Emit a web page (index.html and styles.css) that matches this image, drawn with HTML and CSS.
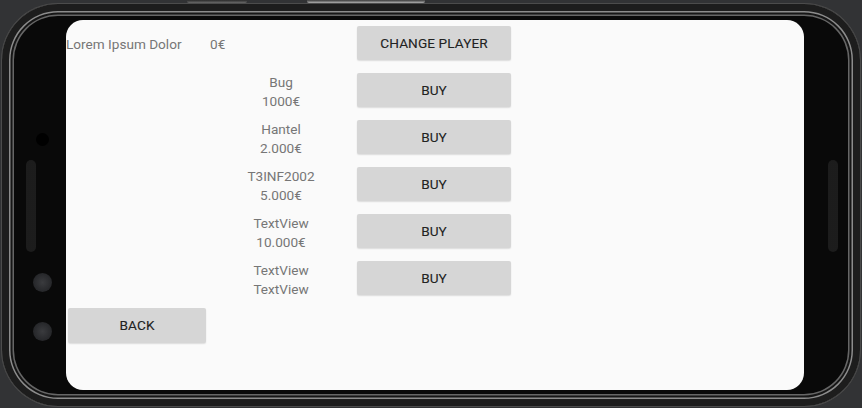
FILE: index.html
```html
<!DOCTYPE html>
<html lang="en">
<head>
    <meta charset="UTF-8">
    <meta name="viewport" content="width=device-width, initial-scale=1">
    <title>Shop</title>
    <link rel="stylesheet" href="styles.css">
</head>
<body>

<div class="side-keys">
    <span class="key key-volume"></span>
    <span class="key key-power"></span>
</div>

<div class="phone">
    <div class="bezel bezel-left">
        <span class="camera"></span>
        <span class="grille"></span>
        <span class="sensor"></span>
        <span class="sensor"></span>
    </div>

    <div class="screen">
        <div class="balance">
            <span class="player-name">Lorem Ipsum Dolor</span>
            <span class="player-money">0€</span>
        </div>
        <button class="button" id="changeplayer">Change Player</button>

        <div class="item">Bug<br>1000€</div>
        <button class="button">Buy</button>

        <div class="item">Hantel<br>2.000€</div>
        <button class="button">Buy</button>

        <div class="item">T3INF2002<br>5.000€</div>
        <button class="button">Buy</button>

        <div class="item">TextView<br>10.000€</div>
        <button class="button">Buy</button>

        <div class="item">TextView<br>TextView</div>
        <button class="button">Buy</button>

        <button class="button back" id="back">Back</button>
    </div>

    <div class="bezel bezel-right">
        <span class="grille"></span>
    </div>
</div>

</body>
</html>
```

FILE: styles.css
```css
body {
    margin: 0;
    height: 408px;
    overflow: hidden;
    background-color: #323335;
    font-family: Roboto, sans-serif;
}
.side-keys {
    display: flex;
    height: 4px;
    padding-left: 187px;
    gap: 60px;
}
.key {
    height: 3px;
    border-radius: 0 0 2px 2px;
    background: linear-gradient(#2a2a2a, #6a6a6a);
}
.key-volume {
    width: 60px;
}
.key-power {
    width: 118px;
    background: linear-gradient(#3a3a3a, #b0b0b0);
}
.phone {
    display: flex;
    box-sizing: border-box;
    height: 402px;
    margin: 0 2px;
    padding: 16px 0;
    border-radius: 56px;
    background-color: #090909;
    box-shadow:
        0 0 0 1px #4c4c4c,
        inset 0 0 0 7px #1d1d1d,
        inset 0 0 0 8.5px #8c8c8c,
        inset 0 0 0 10.5px #161616,
        inset 0 0 0 12px #666;
}
.bezel {
    display: flex;
    flex-direction: column;
    flex: 0 0 auto;
}
.bezel-left {
    width: 64px;
    padding-top: 113px;
}
.bezel-right {
    width: 56px;
    padding-top: 140px;
}
.camera {
    width: 13px;
    height: 13px;
    margin-left: 34px;
    border-radius: 50%;
    background-color: #000;
}
.grille {
    width: 10px;
    height: 92px;
    margin-top: 14px;
    margin-left: 24px;
    border-radius: 5px;
    background: radial-gradient(#2e2e2e 0.5px, transparent 0.8px) 0 0 / 2px 2px, #151515;
}
.bezel-right .grille {
    margin-top: 0;
}
.sensor {
    width: 19px;
    height: 19px;
    margin-left: 31px;
    margin-top: 21px;
    border-radius: 50%;
    background: radial-gradient(circle, #3a3b3e 0, #2a2b2e 55%, #1d1e20 100%);
}
.sensor + .sensor {
    margin-top: 30px;
}
.screen {
    flex: 0 0 738px;
    display: grid;
    grid-template-columns: 291px 154px;
    grid-auto-rows: 34px;
    row-gap: 13px;
    align-items: center;
    padding-top: 6px;
    box-sizing: border-box;
    border-radius: 17px;
    background-color: #fafafa;
    font-size: 13.6px;
    color: #767676;
}
.balance {
    display: flex;
    padding-top: 2px;
}
.player-name {
    width: 144px;
}
.item {
    justify-self: end;
    width: 152px;
    padding-top: 3px;
    line-height: 18.5px;
    text-align: center;
}
.button {
    height: 34px;
    padding: 0;
    font-family: Roboto, sans-serif;
    font-size: 13.6px;
    font-weight: 400;
    letter-spacing: 0.1px;
    -webkit-text-stroke: 0.1px #222;
    text-transform: uppercase;
    color: #222;
    background-color: #d6d6d6;
    border: none;
    border-radius: 2px;
    box-shadow: 0 1px 1.5px rgba(0, 0, 0, 0.12);
    cursor: pointer;
}
.button:active {
    background-color: #c4c4c4;
}
.back {
    grid-column: 1;
    justify-self: start;
    width: 138px;
    height: 35px;
    margin-left: 2px;
}
```
